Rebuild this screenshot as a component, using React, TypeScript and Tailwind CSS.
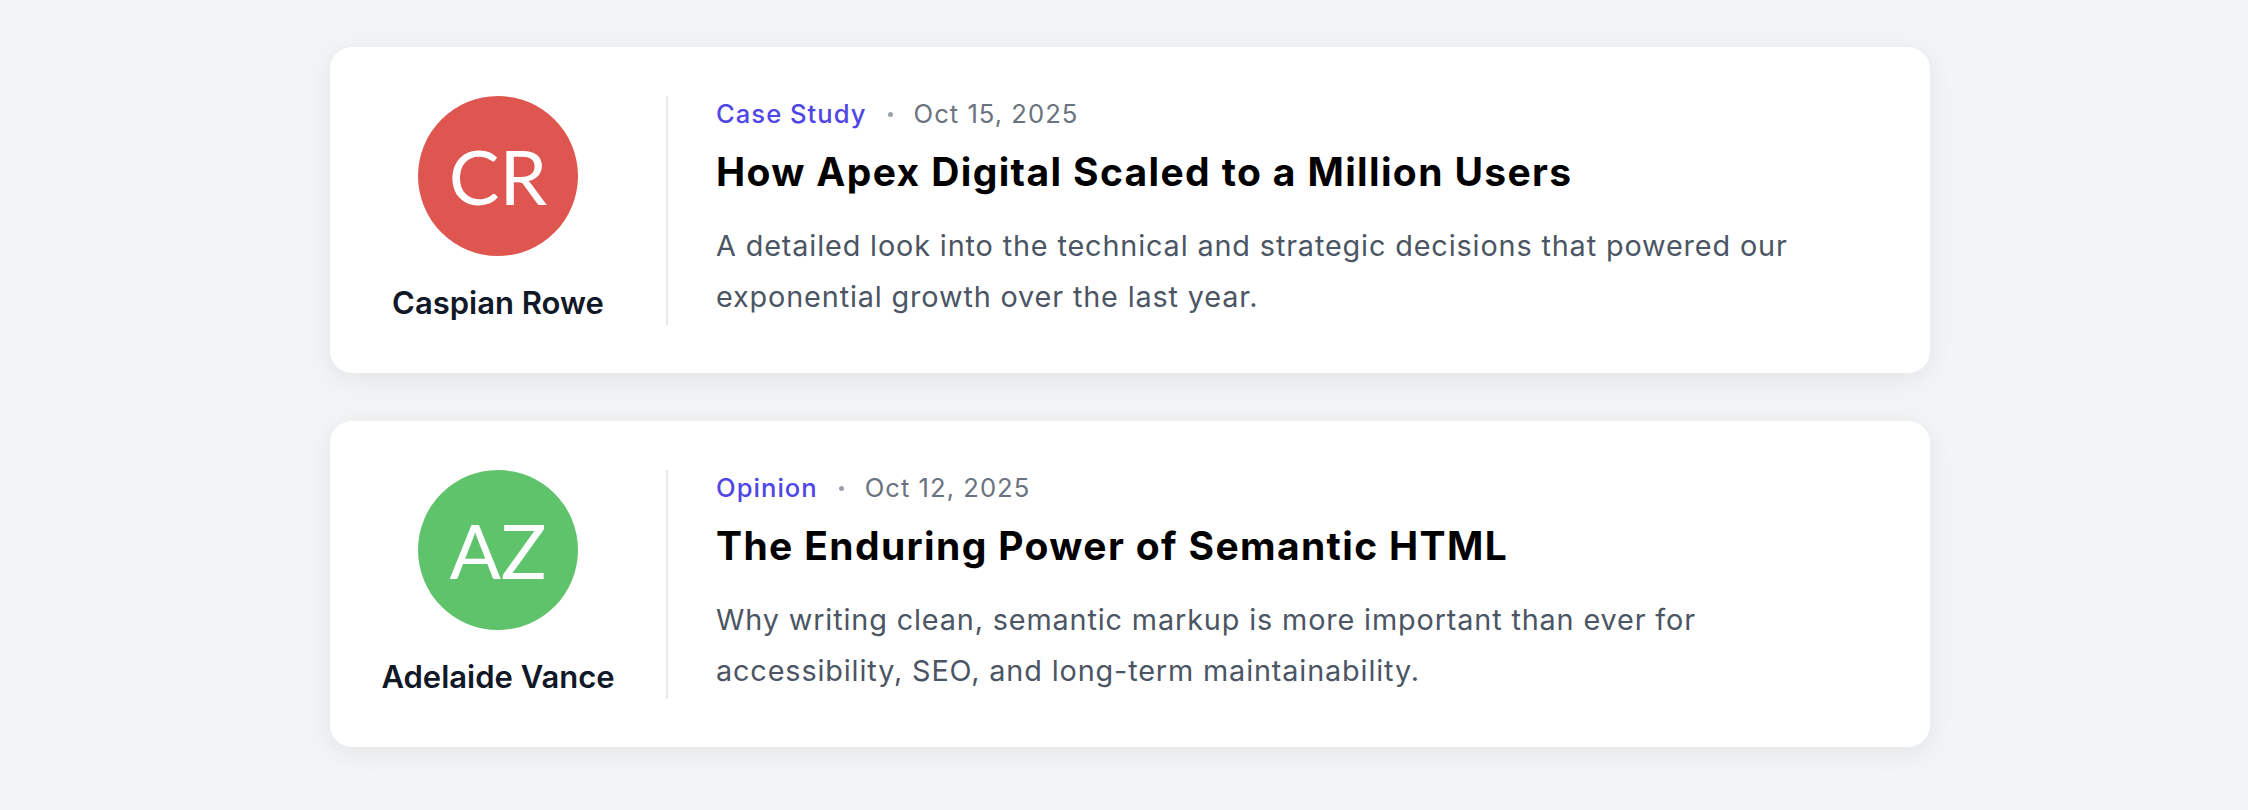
import React from "react";

type Post = {
  initials: string;
  author: string;
  avatarClass: string;
  category: string;
  date: string;
  title: string;
  excerpt: string;
};

const posts: Post[] = [
  {
    initials: "CR",
    author: "Caspian Rowe",
    avatarClass: "bg-[#df5550]",
    category: "Case Study",
    date: "Oct 15, 2025",
    title: "How Apex Digital Scaled to a Million Users",
    excerpt:
      "A detailed look into the technical and strategic decisions that powered our exponential growth over the last year.",
  },
  {
    initials: "AZ",
    author: "Adelaide Vance",
    avatarClass: "bg-[#5ec36a]",
    category: "Opinion",
    date: "Oct 12, 2025",
    title: "The Enduring Power of Semantic HTML",
    excerpt:
      "Why writing clean, semantic markup is more important than ever for accessibility, SEO, and long-term maintainability.",
  },
];

function PostCard({ post }: { post: Post }) {
  return (
    <article className="flex rounded-[22px] bg-white pt-[49px] pb-[48px] px-[48px] shadow-[0_6px_28px_rgba(17,24,39,0.07)]">
      {/* Author */}
      <div className="flex w-[240px] shrink-0 flex-col items-center gap-[24px]">
        <div
          className={`flex h-[160px] w-[160px] items-center justify-center rounded-full ${post.avatarClass}`}
        >
          <span className="font-['Lato',sans-serif] text-[76px] leading-none text-white">
            {post.initials}
          </span>
        </div>
        <span className="text-[31px] leading-[45px] font-semibold text-[#111827]">
          {post.author}
        </span>
      </div>

      <div className="mx-[48px] w-[2px] shrink-0 bg-[#e5e7eb]" />

      {/* Post body */}
      <div className="flex min-w-0 flex-1 flex-col">
        <div className="flex items-center gap-[21px] text-[25.6px] leading-[36px] tracking-[0.04em]">
          <span className="font-medium text-[#4f46e5]">{post.category}</span>
          <span className="h-[5px] w-[5px] rounded-full bg-[#9ca3af]" />
          <span className="text-[#6b7280]">{post.date}</span>
        </div>
        <h2 className="mt-[16px] text-[39px] leading-[48px] font-bold tracking-[0.035em] text-black">
          {post.title}
        </h2>
        <p className="mt-[24px] max-w-[1120px] text-[28.8px] leading-[51px] tracking-[0.03em] text-[#4b5563]">
          {post.excerpt}
        </p>
      </div>
    </article>
  );
}

export default function App() {
  return (
    <div className="min-h-screen bg-[#f3f4f6] pt-[47px] pb-[65px] pl-[330px] pr-[318px] font-['Inter',sans-serif]">
      <div className="flex flex-col gap-[48px]">
        {posts.map((post) => (
          <PostCard key={post.initials} post={post} />
        ))}
      </div>
    </div>
  );
}
